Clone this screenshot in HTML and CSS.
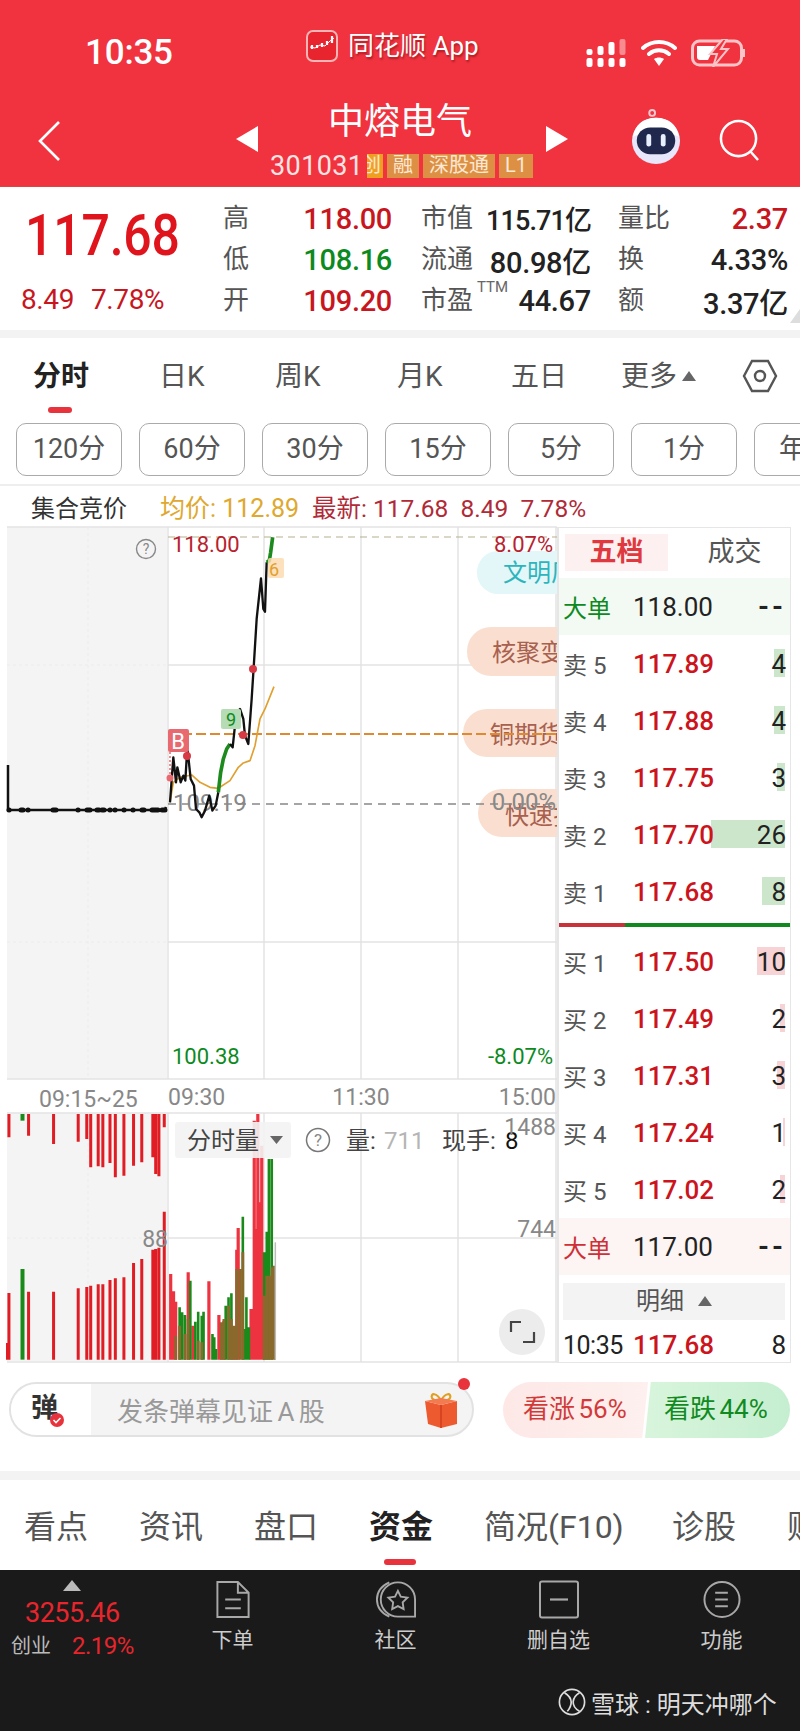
FILE: index.html
```html
<!DOCTYPE html>
<html lang="zh">
<head>
<meta charset="utf-8">
<title>中熔电气</title>
<link rel="stylesheet" href="styles.css">
</head>
<body>
<div class="app">
  <header class="header">
    <div class="status">
      <span class="clock">10:35</span>
      <div class="app-name">
        <svg class="app-logo" viewBox="0 0 32 32"><rect x="1" y="1" width="30" height="30" rx="6" fill="#e8252f" stroke="#f7b5b5" stroke-width="2"/><path d="M4 17l5 1 5-3 5 1 5-5 4-3" stroke="#fff" stroke-width="1" fill="none"/><path d="M6 15v4M11 15v3M16 13v4M21 11v4M26 6v7" stroke="#fff" stroke-width="2.2"/></svg>
        <span>同花顺 App</span>
      </div>
      <div class="status-icons">
        <svg class="signal" viewBox="0 0 40 28"><g fill="#fff"><rect x="0" y="19" width="6" height="9" rx="2"/><rect x="11" y="19" width="6" height="9" rx="2"/><rect x="22" y="19" width="6" height="9" rx="2"/><rect x="33" y="19" width="6" height="9" rx="2"/><rect x="0" y="10" width="6" height="6" rx="2"/><rect x="11" y="7" width="6" height="9" rx="2"/><rect x="22" y="3" width="6" height="13" rx="2"/></g><rect x="33" y="0" width="6" height="16" rx="2" fill="#f78b90"/></svg>
        <svg class="wifi" viewBox="0 0 36 28"><path d="M2 9c9-8 23-8 32 0M8 15c6-5 14-5 20 0" fill="none" stroke="#fff" stroke-width="4" stroke-linecap="round"/><path d="M13 20c3-2 7-2 10 0l-5 7z" fill="#fff"/></svg>
        <svg class="battery" viewBox="0 0 56 28"><rect x="1.500" y="2" width="49" height="24" rx="7" fill="none" stroke="#fbc4c7" stroke-width="3"/><path d="M6 7h18l-7 14H9a3 3 0 0 1-3-3z" fill="#fff"/><path d="M53 10v8" stroke="#fbc4c7" stroke-width="2"/><path d="M32 0L19 15h7l-4 13 15-18h-7l6-10z" fill="#f0333f" stroke="#fbc4c7" stroke-width="2"/></svg>
      </div>
    </div>
    <div class="nav">
      <svg class="back" viewBox="0 0 24 42"><path d="M22 2L3 21l19 19" fill="none" stroke="#fff" stroke-width="2.6"/></svg>
      <div class="title-group">
        <span class="arrow arrow-left"></span>
        <div class="title-main">
          <div class="stock-name">中熔电气</div>
          <div class="stock-code">
            <span class="code-num">301031</span>
            <span class="tag tag-narrow">创</span><span class="tag">融</span><span class="tag">深股通</span><span class="tag">L1</span>
          </div>
        </div>
        <span class="arrow arrow-right"></span>
      </div>
      <svg class="robot" viewBox="0 0 52 60"><circle cx="22" cy="5" r="3" fill="none" stroke="#f6c9d0" stroke-width="2"/><ellipse cx="26" cy="34" rx="25" ry="24" fill="#e8e6fa"/><path d="M26 10c14 0 22 8 24 20-8-6-40-6-48 0C4 18 12 10 26 10z" fill="#fff"/><rect x="6" y="20" width="40" height="28" rx="14" fill="#20284d"/><rect x="16" y="27" width="5" height="13" rx="2.5" fill="#e8f0ff"/><rect x="31" y="27" width="5" height="13" rx="2.5" fill="#e8f0ff"/></svg>
      <svg class="search" viewBox="0 0 42 44"><circle cx="20" cy="20" r="18" fill="none" stroke="#fff" stroke-width="2.6"/><path d="M32 33l8 9" stroke="#fff" stroke-width="2.6"/></svg>
    </div>
  </header>

  <section class="quote">
    <div class="quote-price">
      <div class="big-price">117.68</div>
      <div class="big-change"><span>8.49</span><span>7.78%</span></div>
    </div>
    <div class="stats">
      <span class="lbl">高</span><b class="val val-red">118.00</b>
      <span class="lbl">市值</span><b class="val val-tight">115.71亿</b>
      <span class="lbl">量比</span><b class="val val-red">2.37</b>
      <span class="lbl">低</span><b class="val val-green">108.16</b>
      <span class="lbl">流通</span><b class="val">80.98亿</b>
      <span class="lbl">换</span><b class="val">4.33%</b>
      <span class="lbl">开</span><b class="val val-red">109.20</b>
      <span class="lbl">市盈<sup class="ttm">TTM</sup></span><b class="val">44.67</b>
      <span class="lbl">额</span><b class="val">3.37亿</b>
    </div>
    <i class="corner"></i>
  </section>
  <div class="strip"></div>

  <nav class="period-tabs">
    <span class="period active">分时</span>
    <span class="period">日K</span>
    <span class="period">周K</span>
    <span class="period">月K</span>
    <span class="period">五日</span>
    <span class="period">更多<i class="tri-up"></i></span>
    <svg class="hex" viewBox="0 0 36 34"><path d="M10 2h16l8 15-8 15H10L2 17z" fill="none" stroke="#555" stroke-width="2.4"/><circle cx="18" cy="17" r="5" fill="none" stroke="#555" stroke-width="2.4"/></svg>
  </nav>
  <div class="minute-btns">
    <span class="mbtn">120分</span><span class="mbtn">60分</span><span class="mbtn">30分</span><span class="mbtn">15分</span><span class="mbtn">5分</span><span class="mbtn">1分</span><span class="mbtn mbtn-cut">年</span>
  </div>
  <div class="info-line">
    <span class="info-title">集合竞价</span>
    <span class="info-avg">均价: 112.89</span>
    <span class="info-new">最新: 117.68&nbsp; 8.49&nbsp; 7.78%</span>
  </div>

  <div class="market">
    <svg class="chart" viewBox="0 526 557 840">
      <rect x="7" y="528" width="160" height="552" fill="#f4f4f4"/>
      <rect x="7" y="1114" width="160" height="248" fill="#f4f4f4"/>
      <path class="grid" d="M7 528H557M168 666H557M168 943H557M7 1080H557M7 1114H557M168 1239H557M7 1363H557M168 528V1080M264 528V1080M361 528V1080M458 528V1080M168 1114V1363M264 1114V1363M361 1114V1363M458 1114V1363M556 528V1363"/>
      <path class="grid-faint" d="M88 528V1080M88 1114V1362M7 666H167M7 943H167M7 1239H167"/>
      <g class="pills">
        <rect x="477" y="552" width="120" height="43" rx="21" fill="#e3f6f8"/>
        <rect x="467" y="628" width="130" height="49" rx="24" fill="#fadfd0"/>
        <rect x="463" y="710" width="134" height="48" rx="24" fill="#fadfd0"/>
        <rect x="478" y="790" width="120" height="48" rx="24" fill="#fadfd0"/>
        <text class="t24 teal" x="503" y="582">文明厂</text>
        <text class="t24 brown" x="492" y="662">核聚变</text>
        <text class="t24 brown" x="490" y="744">铜期货</text>
        <text class="t24 brown" x="505" y="825">快速拉</text>
      </g>
      <path class="dash-gray" d="M168 538H557"/>
      <path class="dash-gray2" d="M168 805H557"/>
      <path class="dash-orange" d="M168 735H557"/>
      <text class="t24 gray" x="173" y="812">109.19</text>
      <text class="t24 gray" x="556" y="811" text-anchor="end">0.00%</text>
      <text class="t22 dred" x="172" y="553">118.00</text>
      <text class="t22 dred" x="553" y="553" text-anchor="end">8.07%</text>
      <text class="t22 dgreen" x="172" y="1065">100.38</text>
      <text class="t22 dgreen" x="553" y="1065" text-anchor="end">-8.07%</text>
      <circle cx="146" cy="550" r="9.500" fill="none" stroke="#888" stroke-width="1.400"/>
      <text class="t14 gray" x="146" y="555" text-anchor="middle">?</text>
      <path class="line-black" d="M8 766V811H165L166 808"/>
      <path class="dots" d="M9 811h.1M21 811h2M28 811h.1M53 811h3M78 811h.1M87 811h3M97 811h2M102 811h2M110 811h.1M115 811h.1M124 811h.1M133 811h.1M142 811h2M152 811h6M162 811h3"/>
      <g transform="translate(150 520) scale(.3333)">
        <path class="avg" d="M60 850L70 790 90 775 125 768 150 790 180 805 205 808 240 785 265 745 280 732 300 725 315 680 330 600 345 570 372 503"/>
        <path class="price" d="M60 850L70 715 78 790 82 745 92 790 100 770 106 785 112 685 122 780 132 800 138 870 148 880 155 895 165 875 178 830 187 875 197 860 205 820"/>
        <path class="price-g" d="M205 820L212 760 220 720 230 690 240 675"/>
        <path class="price" d="M240 675L248 685 255 620 260 580 270 570 280 600 285 650 295 675 305 540 312 430 320 300 333 178 340 270 345 278 350 130"/>
        <path class="price-g" d="M350 130L358 125 362 100 368 55"/>
      </g>
      <path class="dotted" d="M170 753V778"/>
      <circle cx="170" cy="779" r="3.500" fill="#e86a70"/>
      <circle cx="187" cy="757" r="4" fill="#d83a45"/>
      <circle cx="243" cy="736" r="4" fill="#d83a45"/>
      <circle cx="253" cy="670" r="4" fill="#d83a45"/>
      <rect x="168" y="730" width="21" height="23" rx="2" fill="#e86a70"/>
      <text class="t22 white" x="178" y="750" text-anchor="middle">B</text>
      <rect x="221" y="710" width="20" height="20" rx="2" fill="#b5dcb5"/>
      <text class="t18 dgreen" x="231" y="727" text-anchor="middle">9</text>
      <rect x="268" y="559" width="16" height="20" rx="2" fill="#fbdcb0" opacity=".85"/>
      <text class="t18 orange" x="274" y="577" text-anchor="middle">6</text>
      <text class="t23 gray" x="39" y="1108">09:15~25</text>
      <text class="t23 gray" x="168" y="1106">09:30</text>
      <text class="t23 gray" x="361" y="1106" text-anchor="middle">11:30</text>
      <text class="t23 gray" x="556" y="1106" text-anchor="end">15:00</text>
      <g transform="translate(0 1060) scale(.3571 .3333)">
        <path class="bar-dred" d="M25 165V235M80 165V230M150 165V255M219 165V248M243 165V240M254 165V325M275 165V322M288 165V325M308 165V312M323 165V355M347 165V350M374 165V320M397 165V310M428 165V295M436 165V345M445 165V352M460 165V205"/>
        <path class="bar-dgreen" d="M63 165V185"/>
        <path class="bar-dred" d="M21 852V902M25 702V902M80 698V902M150 698V902M219 688V902M243 684V902M254 680V902M275 676V902M288 676V902M308 663V902M323 658V902M347 655V902M374 612V902M397 600V902M428 572V902M436 570V902M445 566V902M460 458V902"/>
        <path class="bar-dgreen" d="M63 630V902"/>
        <path class="bar-red" d="M478 645V902M486 697V902M492 728V902M527 640V902M540 800V902M585 667V902M613 768V902M620 845V902M627 785V902M655 805V902M663 572V902M667 507V902M703 750V902M712 185V902M718 510V902M722 165V902M728 430V902M733 260V902"/>
        <path class="bar-green" d="M503 745V902M510 760V902M518 768V902M533 665V902M547 788V902M555 758V902M565 770V902M570 758V902M595 825V902M600 835V902M605 870V902M632 740V902M640 715V902M648 703V902M680 473V902M685 810V902M690 715V902M697 805V902M740 580V902M747 518V902M753 300V902M761 300V902"/>
        <path class="bar-mix" d="M492 830V902M503 800V902M518 825V902M527 780V902M555 845V902M565 850V902M620 790V902M627 780V902M640 740V902M648 780V902M655 800V902M663 630V902M672 630V902M680 580V902M740 710V902M747 650V902M755 650V902M762 625V902M768 620V902"/>
        <path class="bar-gray" d="M771 550V900"/>
      </g>
      <rect x="175" y="1123" width="116" height="36" rx="3" fill="#f3f3f3" opacity=".9"/>
      <text class="t24 dark" x="187" y="1150">分时量</text>
      <path d="M270 1137h13l-6.500 8z" fill="#666"/>
      <circle cx="318" cy="1141" r="11.500" fill="none" stroke="#777" stroke-width="1.500"/>
      <text class="t17 gray" x="318" y="1147" text-anchor="middle">?</text>
      <text class="t24 dark" x="346" y="1150">量:</text>
      <text class="t24 lgray" x="384" y="1150">711</text>
      <text class="t24 dark" x="442" y="1150">现手:</text>
      <text class="t24 black" x="505" y="1150">8</text>
      <text class="t23 gray" x="556" y="1136" text-anchor="end">1488</text>
      <text class="t23 gray" x="556" y="1238" text-anchor="end">744</text>
      <text class="t23 gray" x="168" y="1248" text-anchor="end">88</text>
      <circle cx="522" cy="1333" r="23" fill="#ececec"/>
      <path d="M511 1333v-10h10M534 1333v10h-11" fill="none" stroke="#444" stroke-width="2.200"/>
    </svg>

    <aside class="book">
      <div class="book-tabs"><span class="book-tab on">五档</span><span class="book-tab">成交</span></div>
      <div class="row row-big-g"><span class="r-lbl c-green">大单</span><span class="r-price c-black">118.00</span><span class="r-qty dashes">--</span></div>
      <div class="row"><span class="r-lbl">卖 5</span><span class="r-price">117.89</span><i class="bar bar-g w11"></i><span class="r-qty">4</span></div>
      <div class="row"><span class="r-lbl">卖 4</span><span class="r-price">117.88</span><i class="bar bar-g w11"></i><span class="r-qty">4</span></div>
      <div class="row"><span class="r-lbl">卖 3</span><span class="r-price">117.75</span><i class="bar bar-g w8"></i><span class="r-qty">3</span></div>
      <div class="row"><span class="r-lbl">卖 2</span><i class="bar bar-g w74"></i><span class="r-price">117.70</span><span class="r-qty">26</span></div>
      <div class="row"><span class="r-lbl">卖 1</span><span class="r-price">117.68</span><i class="bar bar-g w23"></i><span class="r-qty">8</span></div>
      <div class="divider"></div>
      <div class="row"><span class="r-lbl">买 1</span><span class="r-price">117.50</span><i class="bar bar-r w28"></i><span class="r-qty">10</span></div>
      <div class="row"><span class="r-lbl">买 2</span><span class="r-price">117.49</span><i class="bar bar-r w5"></i><span class="r-qty">2</span></div>
      <div class="row"><span class="r-lbl">买 3</span><span class="r-price">117.31</span><i class="bar bar-r w8"></i><span class="r-qty">3</span></div>
      <div class="row"><span class="r-lbl">买 4</span><span class="r-price">117.24</span><i class="bar bar-r w2"></i><span class="r-qty">1</span></div>
      <div class="row"><span class="r-lbl">买 5</span><span class="r-price">117.02</span><i class="bar bar-r w5"></i><span class="r-qty">2</span></div>
      <div class="row row-big-r"><span class="r-lbl c-red">大单</span><span class="r-price c-black">117.00</span><span class="r-qty dashes">--</span></div>
      <div class="detail-head">明细<i class="tri-up tri-detail"></i></div>
      <div class="row row-last"><span class="r-time">10:35</span><span class="r-price">117.68</span><span class="r-qty">8</span></div>
    </aside>
  </div>

  <div class="danmu-bar">
    <div class="danmu">
      <span class="danmu-icon">弹<svg class="danmu-check" viewBox="0 0 14 14"><circle cx="7" cy="7" r="7" fill="#e8323c"/><path d="M3.500 7l2.500 2.500 4.500-4.500" fill="none" stroke="#fff" stroke-width="1.600"/></svg></span>
      <span class="danmu-input">发条弹幕见证 A 股</span>
      <svg class="gift" viewBox="0 0 34 36"><path d="M17 9C13 0 6 1 8 6c1 2 5 3 9 3zM17 9c4-9 11-8 9-3-1 2-5 3-9 3z" fill="none" stroke="#e0a020" stroke-width="2.200"/><path d="M1 9l16 4 16-4v23l-16 4-13-4z" fill="#ee5a30"/><path d="M1 9l16 4 16-4-16-3z" fill="#f47a50"/><path d="M17 13v23" stroke="#d9431f" stroke-width="2"/></svg>
      <i class="danmu-dot"></i>
    </div>
    <div class="votes">
      <span class="vote vote-up">看涨 56%</span>
      <span class="vote vote-down">看跌 44%</span>
    </div>
  </div>
  <div class="strip strip-low"></div>

  <nav class="info-tabs">
    <span class="itab">看点</span><span class="itab">资讯</span><span class="itab">盘口</span><span class="itab active">资金</span><span class="itab">简况(F10)</span><span class="itab">诊股</span><span class="itab">财务</span>
  </nav>

  <footer class="footer">
    <div class="foot-grid">
      <div class="index">
        <i class="tri-index"></i>
        <div class="index-val">3255.46</div>
        <div class="index-row"><span class="index-name">创业</span><span class="index-pct">2.19%</span></div>
      </div>
      <div class="fitem">
        <svg class="ficon" viewBox="0 0 40 40"><path d="M4 2h21l11 11v25H4zM25 2v11h11M12 20h16M12 29h16" fill="none" stroke="#a8a8a8" stroke-width="2"/></svg>
        <span>下单</span>
      </div>
      <div class="fitem">
        <svg class="ficon" viewBox="0 0 42 40"><path d="M14 2C5 6 1 13 1 20s4 14 13 18" fill="none" stroke="#a8a8a8" stroke-width="2"/><path d="M41 38H23a18 18 0 1 1 18-18z" fill="none" stroke="#a8a8a8" stroke-width="2"/><path d="M23 11l3 6 7 1-5 5 1 7-6-3-6 3 1-7-5-5 7-1z" fill="none" stroke="#a8a8a8" stroke-width="2"/></svg>
        <span>社区</span>
      </div>
      <div class="fitem">
        <svg class="ficon" viewBox="0 0 40 38"><rect x="1" y="1" width="38" height="36" rx="2" fill="none" stroke="#a8a8a8" stroke-width="2"/><path d="M11 19h18" stroke="#a8a8a8" stroke-width="2.200"/></svg>
        <span>删自选</span>
      </div>
      <div class="fitem">
        <svg class="ficon" viewBox="0 0 40 40"><circle cx="20" cy="20" r="18" fill="none" stroke="#a8a8a8" stroke-width="2"/><path d="M13 13h13M13 20h13M13 27h13" stroke="#a8a8a8" stroke-width="2"/></svg>
        <span>功能</span>
      </div>
    </div>
    <div class="watermark">
      <svg class="wm-logo" viewBox="0 0 30 30"><circle cx="15" cy="15" r="13.500" fill="none" stroke="#ddd" stroke-width="1.800"/><path d="M7 5c10 6 8 14 3 20M23 5c-8 5-10 14 0 20" fill="none" stroke="#ddd" stroke-width="1.800"/></svg>
      <span>雪球 : 明天冲哪个</span>
    </div>
  </footer>
</div>
</body>
</html>
```
FILE: styles.css
```css
* { box-sizing: border-box; }
html, body { margin: 0; padding: 0; background: #fff; }
body { font-family: Roboto, "Noto Sans CJK SC", sans-serif; color: #333; }
.app { width: 800px; height: 1731px; overflow: hidden; display: flex; flex-direction: column; }

/* header */
.header { height: 187px; background: #f0333f; color: #fff; flex: none; border-bottom: 1px solid #d44; }
.status { height: 100px; display: grid; grid-template-columns: 305px 279px 1fr; align-items: start; padding-left: 85px; }
.clock { font-size: 35px; font-weight: 500; line-height: 40px; margin-top: 33px; letter-spacing: -.2px; }
.app-name { display: flex; align-items: center; gap: 10px; font-size: 26px; line-height: 32px; margin: 30px 0 0 -84px; text-shadow: 1px 2px 2px rgba(90,0,0,.45); white-space: nowrap; }
.app-logo { width: 32px; height: 32px; flex: none; }
.status-icons { display: flex; align-items: center; gap: 14px; margin: 39px 0 0 -83px; }
.signal { width: 41px; height: 28px; }
.wifi { width: 36px; height: 28px; }
.battery { width: 56px; height: 28px; }
.nav { height: 86px; display: flex; align-items: flex-start; position: relative; }
.back { width: 24px; height: 42px; margin: 20px 0 0 37px; flex: none; }
.title-group { display: flex; align-items: flex-start; margin-left: 175px; width: 332px; }
.arrow { width: 0; height: 0; border-top: 13px solid transparent; border-bottom: 13px solid transparent; margin-top: 26px; flex: none; }
.arrow-left { border-right: 22px solid #fff; }
.arrow-right { border-left: 22px solid #fff; }
.title-main { width: 288px; }
.stock-name { font-size: 36px; line-height: 44px; text-align: center; margin: 0 4px 0 0; }
.stock-code { display: flex; align-items: center; height: 24px; margin: 10px 0 0 12px; }
.code-num { font-size: 27px; letter-spacing: .4px; width: 97px; flex: none; color: #fde4e4; }
.tag { background: #dd9044; font-size: 20px; line-height: 22px; height: 24px; padding: 0 6px; margin-right: 4px; color: #fce8d4; white-space: nowrap; }
.tag-narrow { width: 16px; padding: 0; overflow: hidden; background: #f0a020; text-indent: -6px; }
.robot { width: 50px; height: 58px; margin: 8px 0 0 63px; flex: none; }
.search { width: 41px; height: 43px; margin: 19px 0 0 38px; flex: none; }

/* quote */
.quote { height: 143px; flex: none; display: flex; position: relative; }
.corner { position: absolute; right: 0; bottom: 7px; width: 0; height: 0; border-left: 10px solid transparent; border-bottom: 14px solid #ddd; }
.quote-price { width: 223px; flex: none; }
.big-price { font-size: 50px; font-weight: 500; color: #e0141c; margin: 20px 0 0 25px; line-height: 56px; letter-spacing: -.2px; transform: scaleY(1.16); transform-origin: left center; }
.big-change { display: flex; gap: 17px; font-size: 28px; color: #c8161e; margin: 22px 0 0 21px; line-height: 30px; letter-spacing: -.4px; }
.stats { display: grid; grid-template-columns: 60px 109px 95px 104px 82px 1fr; grid-auto-rows: 41px; padding: 11px 12px 0 0; flex: 1; align-items: center; }
.lbl { font-size: 26px; color: #555; white-space: nowrap; line-height: 41px; position: relative; }
.lbl:nth-child(6n+3) { margin-left: 29px; }
.lbl:nth-child(6n+5) { margin-left: 27px; }
.val { font-size: 29px; font-weight: 500; color: #222; justify-self: end; white-space: nowrap; letter-spacing: -.3px; }
.val-tight { font-size: 27px; letter-spacing: -.9px; }
.val-red { color: #c8161e; }
.val-green { color: #0c8a1e; }
.ttm { position: absolute; left: 56px; top: -2px; font-size: 15px; line-height: 18px; color: #666; }
.strip { height: 8px; background: #f3f3f3; flex: none; }
.strip-low { height: 9px; }

/* period tabs */
.period-tabs { height: 82px; flex: none; display: grid; grid-template-columns: 126px 116px 122px 114px 110px 121px 40px; padding: 21px 0 0 33px; align-items: start; }
.period { font-size: 28px; line-height: 36px; color: #555; white-space: nowrap; position: relative; }
.period.active { font-weight: 700; color: #222; }
.period.active::after { content: ""; position: absolute; left: 15px; top: 48px; width: 24px; height: 6px; border-radius: 3px; background: #e8323c; }
.tri-up { display: inline-block; width: 0; height: 0; border-left: 7px solid transparent; border-right: 7px solid transparent; border-bottom: 10px solid #666; margin-left: 5px; vertical-align: 5px; }
.hex { width: 36px; height: 34px; }
.minute-btns { flex: none; display: flex; gap: 17px; padding-left: 16px; height: 63px; border-bottom: 2px solid #eee; margin-top: 3px; overflow: hidden; }
.mbtn { flex: none; width: 106px; height: 53px; border: 1.500px solid #aaa; border-radius: 10px; font-size: 27px; line-height: 50px; text-align: center; color: #555; }
.mbtn-cut { padding-left: 24px; text-align: left; }
.info-line { flex: none; height: 38px; display: flex; align-items: center; font-size: 24px; padding-left: 31px; margin-top: 1px; white-space: nowrap; }
.info-title { color: #333; width: 129px; flex: none; }
.info-avg { color: #e0a82e; width: 152px; flex: none; font-size: 25px; }
.info-new { color: #b02a37; font-size: 24.500px; }

/* market row */
.market { flex: none; height: 840px; display: flex; }
.chart { width: 557px; height: 840px; flex: none; display: block; font-family: Roboto, "Noto Sans CJK SC", sans-serif; }
.grid { stroke: #e3e3e3; stroke-width: 1.500; fill: none; }
.grid-faint { stroke: #ececec; stroke-width: 1; stroke-dasharray: 3 3; fill: none; }
.dash-gray { stroke: #b8b090; stroke-width: 1.200; stroke-dasharray: 7 5; fill: none; }
.dash-gray2 { stroke: #888; stroke-width: 1.500; stroke-dasharray: 8 6; fill: none; }
.dash-orange { stroke: #dd8a30; stroke-width: 2; stroke-dasharray: 10 4; fill: none; }
.dotted { stroke: #e86a70; stroke-width: 1.500; stroke-dasharray: 2 2; fill: none; }
.line-black { stroke: #111; stroke-width: 2.500; fill: none; }
.dots { stroke: #111; stroke-width: 5; stroke-linecap: round; fill: none; }
.avg { stroke: #e0a030; stroke-width: 5; fill: none; stroke-linejoin: round; }
.price { stroke: #111; stroke-width: 7; fill: none; stroke-linejoin: round; }
.price-g { stroke: #1d8a1d; stroke-width: 11; fill: none; stroke-linejoin: round; }
.bar-red, .bar-dred, .bar-green, .bar-dgreen, .bar-mix, .bar-gray { fill: none; vector-effect: non-scaling-stroke; }
.bar-red { stroke: #ee3340; stroke-width: 3.200px; }
.bar-dred { stroke: #e01c24; stroke-width: 3px; }
.bar-green { stroke: #1a8a1a; stroke-width: 2.600px; }
.bar-dgreen { stroke: #1a8a1a; stroke-width: 4px; }
.bar-mix { stroke: #8a6a2c; stroke-width: 2.800px; }
.bar-gray { stroke: #bbb; stroke-width: 1.500px; }
.t14 { font-size: 14px; }
.t17 { font-size: 17px; }
.t18 { font-size: 18px; }
.t22 { font-size: 22px; }
.t23 { font-size: 23px; }
.t24 { font-size: 24px; }
.gray { fill: #888; }
.lgray { fill: #b5b5b5; }
.dark { fill: #444; }
.black { fill: #111; }
.white { fill: #fff; }
.dred { fill: #b8222e; }
.dgreen { fill: #0d8a1e; }
.orange { fill: #e0a030; }
.teal { fill: #2db5bd; }
.brown { fill: #a8604f; }

/* order book */
.book { width: 234px; flex: none; margin-top: 2px; height: 836px; border: 1.500px solid #e6e6e6; border-left-width: 2px; display: flex; flex-direction: column; overflow: hidden; }
.book-tabs { height: 50px; flex: none; display: flex; padding: 6px 0 0 6px; }
.book-tab { width: 103px; height: 37px; font-size: 27px; line-height: 37px; text-align: center; color: #555; flex: none; margin-right: 15px; }
.book-tab.on { background: #fdf0f0; color: #e0383f; font-weight: 700; }
.row { height: 57px; flex: none; display: flex; align-items: center; position: relative; padding: 0 4px; }
.row-big-g { background: #f3f9f3; }
.row-big-r { background: #fdf4f4; }
.r-lbl { width: 70px; flex: none; font-size: 24px; color: #555; position: relative; }
.r-time { width: 70px; flex: none; font-size: 25px; color: #222; letter-spacing: -.5px; position: relative; }
.r-price { font-size: 26px; font-weight: 500; color: #cc141c; position: relative; }
.c-black { color: #222; font-weight: 400; }
.c-green { color: #0d8a1e; }
.c-red { color: #cf2f36; }
.r-qty { margin-left: auto; font-size: 26px; color: #222; position: relative; }
.dashes { font-weight: 700; font-size: 28px; letter-spacing: 3px; }
.bar { position: absolute; right: 5px; top: 14px; height: 28px; }
.bar-g { background: #cbe6cb; }
.bar-r { background: #f7d3d6; }
.w2 { width: 2px; }
.w5 { width: 5px; }
.w8 { width: 8px; }
.w11 { width: 11px; }
.w23 { width: 23px; }
.w28 { width: 28px; }
.w74 { width: 74px; }
.divider { height: 4px; flex: none; margin: 3px 0 6px; background: linear-gradient(90deg, #c8323a 0 66px, #108a1e 66px); }
.detail-head { height: 37px; flex: none; margin: 8px 5px 0 4px; background: #f3f3f3; font-size: 24px; line-height: 37px; text-align: center; color: #555; }
.tri-detail { margin-left: 14px; vertical-align: 3px; }
.row-last { height: 43px; padding-top: 7px; }

/* danmu */
.danmu-bar { flex: none; height: 106px; display: flex; padding: 17px 9px 0; }
.danmu { width: 465px; height: 55px; border: 2px solid #e2e2e2; border-radius: 28px; background: #f4f4f4; display: flex; align-items: center; position: relative; flex: none; }
.danmu-icon { width: 80px; height: 51px; border-radius: 26px 0 0 26px; background: #fff; font-size: 27px; font-weight: 700; line-height: 49px; padding-left: 20px; color: #333; position: relative; flex: none; }
.danmu-check { position: absolute; left: 39px; top: 29px; width: 14px; height: 14px; }
.danmu-input { font-size: 26px; color: #999; margin-left: 26px; white-space: nowrap; flex: 1; word-spacing: -2px; }
.gift { width: 34px; height: 36px; margin-right: 14px; flex: none; }
.danmu-dot { position: absolute; right: 2px; top: -6px; width: 12px; height: 12px; border-radius: 50%; background: #e8323c; }
.votes { display: flex; margin-left: 29px; flex: none; }
.vote { height: 56px; width: 145px; font-size: 26px; line-height: 54px; white-space: nowrap; flex: none; word-spacing: -3px; }
.vote-up { background: linear-gradient(90deg, #fde8e6, #fdf0ee); color: #d23a3a; border-radius: 28px 0 0 28px; padding-left: 20px; clip-path: polygon(0 0, 100% 0, 96% 100%, 0 100%); }
.vote-down { background: linear-gradient(90deg, #d8f5dc, #c5eed0); color: #118a22; border-radius: 0 28px 28px 0; padding-left: 19px; margin-left: -3px; clip-path: polygon(4% 0, 100% 0, 100% 100%, 0 100%); }

/* info tabs */
.info-tabs { flex: none; height: 90px; display: grid; grid-template-columns: 115px 115px 115px 115px 188px 115px 115px; padding: 26px 0 0 24px; overflow: hidden; }
.itab { font-size: 32px; line-height: 42px; color: #555; white-space: nowrap; position: relative; }
.itab.active { font-weight: 700; color: #222; }
.itab.active::after { content: ""; position: absolute; left: 15px; top: 53px; width: 32px; height: 6px; border-radius: 3px; background: #e8323c; }

/* footer */
.footer { flex: 1; background: #1a1a1a; color: #ccc; display: flex; flex-direction: column; }
.foot-grid { display: grid; grid-template-columns: 140px repeat(4, 163px); padding: 10px 0 0 11px; height: 110px; }
.index { position: relative; padding-top: 17px; }
.tri-index { position: absolute; left: 52px; top: 0; width: 0; height: 0; border-left: 9px solid transparent; border-right: 9px solid transparent; border-bottom: 11px solid #bbb; }
.index-val { font-size: 27px; color: #e8252c; line-height: 32px; margin-left: 14px; letter-spacing: -.5px; }
.index-row { display: flex; align-items: center; line-height: 30px; margin-top: 2px; }
.index-name { font-size: 20px; width: 61px; color: #bbb; }
.index-pct { font-size: 24px; color: #e8252c; letter-spacing: -.5px; }
.fitem { display: flex; flex-direction: column; align-items: center; font-size: 21px; line-height: 28px; color: #ccc; gap: 7px; }
.ficon { width: 40px; height: 39px; flex: none; }
.watermark { display: flex; align-items: center; gap: 5px; padding-left: 558px; height: 40px; margin-top: 2px; font-size: 24px; color: #ddd; white-space: nowrap; }
.wm-logo { width: 28px; height: 28px; flex: none; }
```
